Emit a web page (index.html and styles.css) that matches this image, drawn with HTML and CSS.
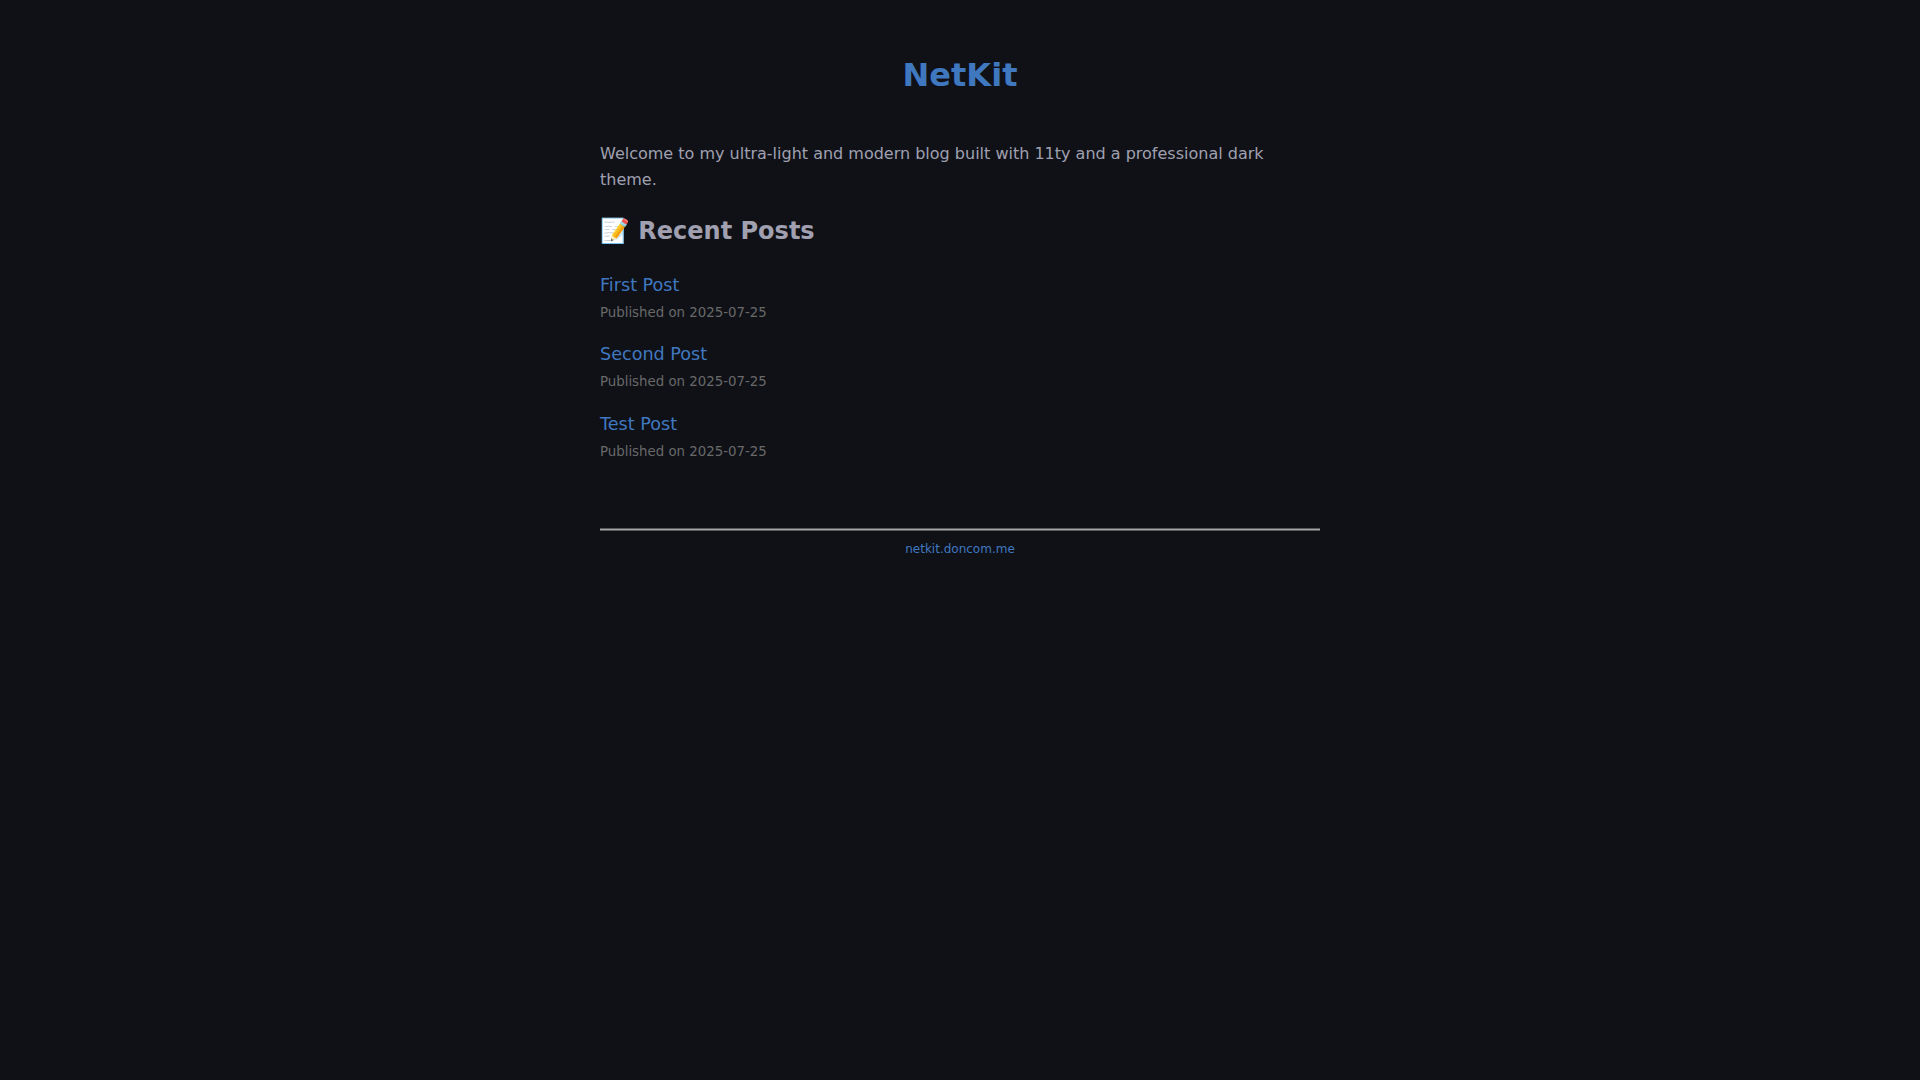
FILE: index.html
```html
<!DOCTYPE html>
<html lang="en">
<head>
<meta charset="utf-8">
<title>NetKit</title>
<link rel="stylesheet" href="styles.css">
</head>
<body>
<header class="site-header"><h1 class="site-title"><a href="#">NetKit</a></h1></header>
<main class="content">
<p class="intro">Welcome to my ultra-light and modern blog built with 11ty and a professional dark theme.</p>
<h2 class="section-title">📝 Recent Posts</h2>
<ul class="posts">
<li class="post"><a href="#">First Post</a><small class="date">Published on 2025-07-25</small></li>
<li class="post"><a href="#">Second Post</a><small class="date">Published on 2025-07-25</small></li>
<li class="post"><a href="#">Test Post</a><small class="date">Published on 2025-07-25</small></li>
</ul>
</main>
<hr class="rule">
<footer class="site-footer"><a href="#">netkit.doncom.me</a></footer>
</body>
</html>
```
FILE: styles.css
```css
html, body { margin: 0; padding: 0; }
body {
  background: #0f1117;
  color: #a0a0b0;
  font-family: "DejaVu Sans", sans-serif;
  font-size: 16px;
  line-height: 1.6;
}
a { color: #4078c0; text-decoration: none; }
.site-header { padding: 50px 0 40px; text-align: center; }
.site-title { margin: 0; font-size: 32px; line-height: 1.6; }
.content { width: 720px; margin: 0 auto; }
.intro { margin: 0 0 16px; }
.section-title { margin: 0.83em 0; font-size: 24px; line-height: 1.6; }
.posts { list-style: none; margin: 0; padding: 0; }
.post { margin-bottom: 16px; }
.post a { display: block; font-size: 17.6px; }
.date { font-size: 13.33px; color: #696969; }
.rule { width: 720px; height: 1px; margin: 64px auto 0; border: 0; border-top: 1px solid #5a5a5a; border-bottom: 1px solid #5a5a5a; background: #a8a8a8; }
.site-footer { text-align: center; font-size: 12px; padding-top: 9px; }
```
